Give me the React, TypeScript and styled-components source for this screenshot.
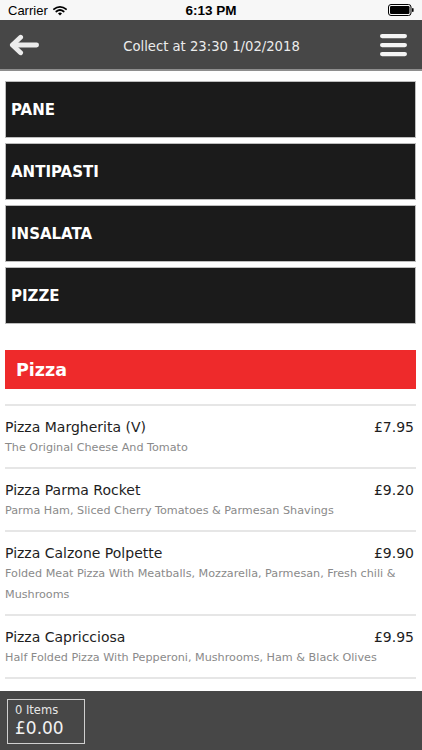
import React from "react";
import styled, { createGlobalStyle } from "styled-components";

const Global = createGlobalStyle`
  html, body { margin: 0; padding: 0; background: #ffffff; }
  body { font-family: "DejaVu Sans", "Open Sans", sans-serif; }
  * { box-sizing: border-box; }
`;

const Screen = styled.div`
  width: 422px;
  height: 750px;
  display: flex;
  flex-direction: column;
  overflow: hidden;
  background: #ffffff;
`;

const StatusBar = styled.div`
  height: 20px;
  flex: none;
  background: #f7f7f7;
  display: grid;
  grid-template-columns: 1fr auto 1fr;
  align-items: center;
  padding: 0 8px;
  font-family: "Liberation Sans", Arial, sans-serif;
  font-size: 13px;
  color: #000;
`;

const StatusLeft = styled.div`
  display: flex;
  align-items: center;
  gap: 5px;
`;

const StatusTime = styled.div`
  font-weight: bold;
  font-size: 13.5px;
`;

const StatusRight = styled.div`
  display: flex;
  justify-content: flex-end;
`;

const Header = styled.div`
  height: 51px;
  flex: none;
  background: #474747;
  border-bottom: 2px solid #8e8e8e;
  display: flex;
  align-items: center;
  justify-content: space-between;
  padding: 0 12px 0 9px;
`;

const Title = styled.div`
  color: #ececec;
  font-size: 13.2px;
  padding: 3px 0 0 4px;
`;

const IconButton = styled.div`
  display: flex;
  align-items: center;
  width: 30px;
`;

const Content = styled.div`
  flex: 1;
  padding: 10px 6px 0 5px;
  display: flex;
  flex-direction: column;
  min-height: 0;
`;

const Categories = styled.div`
  display: flex;
  flex-direction: column;
  gap: 5px;
`;

const Category = styled.div`
  height: 57px;
  background: #1b1b1b;
  border: 1px solid #bdbdbd;
  display: flex;
  align-items: center;
  padding-left: 5px;
  color: #ffffff;
  font-weight: bold;
  font-size: 15px;
`;

const SectionHeader = styled.div`
  margin-top: 26px;
  height: 39px;
  background: #ee2a2b;
  display: flex;
  align-items: center;
  padding-left: 11px;
  color: #ffffff;
  font-weight: bold;
  font-size: 17.5px;
`;

const ItemList = styled.div`
  margin-top: 15px;
  border-top: 2px solid #e6e6e6;
`;

const Item = styled.div`
  padding: 11px 2px 9px 0;
  border-bottom: 2px solid #e6e6e6;
`;

const ItemRow = styled.div`
  display: flex;
  justify-content: space-between;
  align-items: center;
  line-height: 20px;
  font-size: 14px;
  color: #1e1e1e;
`;

const ItemDesc = styled.div`
  max-width: 398px;
  line-height: 21px;
  font-size: 11.2px;
  color: #8a8a8a;
`;

const Footer = styled.div`
  height: 59px;
  flex: none;
  background: #474747;
  padding: 8px 0 0 7px;
`;

const CartBox = styled.div`
  width: 78px;
  height: 45px;
  border: 1px solid #cfcfcf;
  padding: 3px 0 0 7px;
  color: #e6e6e6;
`;

const CartCount = styled.div`
  font-size: 11.5px;
  line-height: 14px;
`;

const CartTotal = styled.div`
  font-size: 17px;
  line-height: 22px;
  color: #f2f2f2;
`;

const WifiIcon = () => (
  <svg width="14" height="11" viewBox="0 0 14 11">
    <path d="M1 4.2 A9 9 0 0 1 13 4.2" fill="none" stroke="#000" strokeWidth="1.8" strokeLinecap="round" />
    <path d="M3.3 6.5 A6 6 0 0 1 10.7 6.5" fill="none" stroke="#000" strokeWidth="1.8" strokeLinecap="round" />
    <path d="M7 10.5 L5 8.4 A3 3 0 0 1 9 8.4 Z" fill="#000" />
  </svg>
);

const BatteryIcon = () => (
  <svg width="26" height="12" viewBox="0 0 26 12">
    <rect x="0.5" y="0.5" width="22.5" height="11" rx="2.5" fill="none" stroke="#000" strokeWidth="1" />
    <rect x="2" y="2" width="19.5" height="8" rx="1.2" fill="#000" />
    <rect x="24" y="4" width="1.6" height="4" rx="0.8" fill="#000" />
  </svg>
);

const BackArrow = () => (
  <svg width="31" height="22" viewBox="0 0 31 22">
    <path d="M4 11 H28.5" stroke="#ececec" strokeWidth="5" strokeLinecap="round" />
    <path d="M12 3 L3.5 11 L12 19" fill="none" stroke="#ececec" strokeWidth="5" strokeLinecap="round" strokeLinejoin="round" />
  </svg>
);

const Hamburger = () => (
  <svg width="28" height="24" viewBox="0 0 28 24">
    <rect x="0" y="1" width="27" height="4.2" rx="2.1" fill="#f4f4f4" />
    <rect x="0" y="10" width="27" height="4.2" rx="2.1" fill="#f4f4f4" />
    <rect x="0" y="19" width="27" height="4.2" rx="2.1" fill="#f4f4f4" />
  </svg>
);

const categories = ["PANE", "ANTIPASTI", "INSALATA", "PIZZE"];

const items = [
  { name: "Pizza Margherita (V)", price: "£7.95", desc: "The Original Cheese And Tomato" },
  { name: "Pizza Parma Rocket", price: "£9.20", desc: "Parma Ham, Sliced Cherry Tomatoes & Parmesan Shavings" },
  {
    name: "Pizza Calzone Polpette",
    price: "£9.90",
    desc: "Folded Meat Pizza With Meatballs, Mozzarella, Parmesan, Fresh chili & Mushrooms",
  },
  {
    name: "Pizza Capricciosa",
    price: "£9.95",
    desc: "Half Folded Pizza With Pepperoni, Mushrooms, Ham & Black Olives",
  },
];

export default function App() {
  return (
    <Screen>
      <Global />
      <StatusBar>
        <StatusLeft>
          <span>Carrier</span>
          <WifiIcon />
        </StatusLeft>
        <StatusTime>6:13 PM</StatusTime>
        <StatusRight>
          <BatteryIcon />
        </StatusRight>
      </StatusBar>
      <Header>
        <IconButton>
          <BackArrow />
        </IconButton>
        <Title>Collect at 23:30 1/02/2018</Title>
        <IconButton>
          <Hamburger />
        </IconButton>
      </Header>
      <Content>
        <Categories>
          {categories.map((c) => (
            <Category key={c}>{c}</Category>
          ))}
        </Categories>
        <SectionHeader>Pizza</SectionHeader>
        <ItemList>
          {items.map((it) => (
            <Item key={it.name}>
              <ItemRow>
                <span>{it.name}</span>
                <span>{it.price}</span>
              </ItemRow>
              <ItemDesc>{it.desc}</ItemDesc>
            </Item>
          ))}
        </ItemList>
      </Content>
      <Footer>
        <CartBox>
          <CartCount>0 Items</CartCount>
          <CartTotal>£0.00</CartTotal>
        </CartBox>
      </Footer>
    </Screen>
  );
}
